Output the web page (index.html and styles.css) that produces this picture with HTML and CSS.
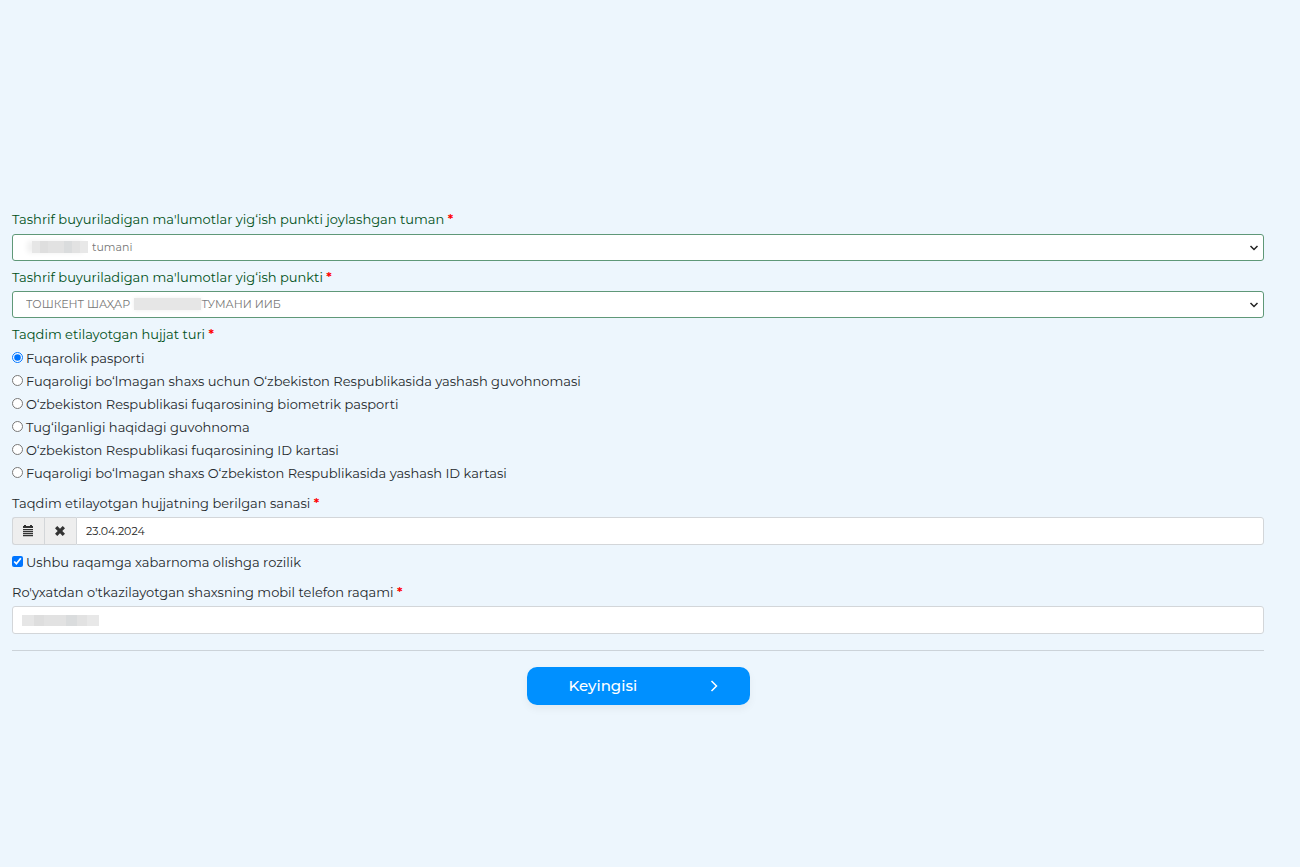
FILE: index.html
```html
<!DOCTYPE html>
<html lang="uz">
<head>
<meta charset="utf-8">
<meta name="viewport" content="width=device-width, initial-scale=1">
<title>Ro'yxatdan o'tish</title>
<link rel="stylesheet" href="styles.css">
</head>
<body>
<form class="form">
  <div class="field valid">
    <label class="label" for="district">Tashrif buyuriladigan ma'lumotlar yig‘ish punkti joylashgan tuman <span class="required">*</span></label>
    <div class="select-wrap">
      <select class="control select district" id="district"><option>tumani</option></select>
      <span class="mask mask-district"></span>
      <svg class="chevron" viewBox="0 0 10 6" aria-hidden="true"><path d="M1.5 1 5 4.5 8.500 1"/></svg>
    </div>
  </div>
  <div class="field valid">
    <label class="label" for="point">Tashrif buyuriladigan ma'lumotlar yig‘ish punkti <span class="required">*</span></label>
    <div class="select-wrap">
      <select class="control select point" id="point"><option>ТОШКЕНТ ШАҲАР&emsp;&emsp;&emsp;&emsp;&emsp;&emsp;&ensp;ТУМАНИ ИИБ</option></select>
      <span class="mask mask-point"></span>
      <svg class="chevron" viewBox="0 0 10 6" aria-hidden="true"><path d="M1.5 1 5 4.500 8.500 1"/></svg>
    </div>
  </div>
  <fieldset class="group valid">
    <legend class="label">Taqdim etilayotgan hujjat turi <span class="required">*</span></legend>
    <label class="choice"><input type="radio" name="doc" checked>Fuqarolik pasporti</label>
    <label class="choice"><input type="radio" name="doc">Fuqaroligi bo‘lmagan shaxs uchun O‘zbekiston Respublikasida yashash guvohnomasi</label>
    <label class="choice"><input type="radio" name="doc">O‘zbekiston Respublikasi fuqarosining biometrik pasporti</label>
    <label class="choice"><input type="radio" name="doc">Tug‘ilganligi haqidagi guvohnoma</label>
    <label class="choice"><input type="radio" name="doc">O‘zbekiston Respublikasi fuqarosining ID kartasi</label>
    <label class="choice"><input type="radio" name="doc">Fuqaroligi bo‘lmagan shaxs O‘zbekiston Respublikasida yashash ID kartasi</label>
  </fieldset>
  <div class="field date-field">
    <label class="label" for="issued">Taqdim etilayotgan hujjatning berilgan sanasi <span class="required">*</span></label>
    <div class="input-group">
      <button class="addon" type="button" aria-label="Kalendar"><svg width="12" height="12" viewBox="0 0 12 12" aria-hidden="true"><path d="M2 0h2v1h4V0h2v1h1v2H1V1h1zM1 4h10v1.300H1zM1 6h10v1.300H1zM1 8h10v1.300H1zM1 10h10v1.300H1z"/></svg></button>
      <button class="addon" type="button" aria-label="Tozalash"><svg width="12" height="12" viewBox="0 0 12 12" aria-hidden="true"><path d="M3.300 1 6 3.700 8.700 1 11 3.300 8.300 6 11 8.700 8.700 11 6 8.300 3.300 11 1 8.700 3.700 6 1 3.300z"/></svg></button>
      <input class="control date" id="issued" type="text" value="23.04.2024">
    </div>
  </div>
  <label class="choice"><input type="checkbox" checked>Ushbu raqamga xabarnoma olishga rozilik</label>
  <div class="field phone-field">
    <label class="label" for="phone">Ro'yxatdan o'tkazilayotgan shaxsning mobil telefon raqami <span class="required">*</span></label>
    <div class="select-wrap">
      <input class="control" id="phone" type="tel">
      <span class="mask mask-phone"></span>
    </div>
  </div>
  <hr class="rule">
  <button class="submit" type="submit"><span>Keyingisi</span><svg width="8" height="12" viewBox="0 0 8 12" aria-hidden="true"><path d="M1.500 1 6.500 6 1.500 11"/></svg></button>
</form>
</body>
</html>
```
FILE: styles.css
```css
* { box-sizing: border-box; }

body {
  margin: 0;
  background: #edf6fd;
  color: #24292c;
  font-family: Montserrat, Inter, "Noto Sans", sans-serif;
  font-size: 13px;
  font-weight: 400;
}

.form {
  display: flex;
  flex-direction: column;
  padding: 209px 36px 40px 12px;
}

.field {
  display: flex;
  flex-direction: column;
  gap: 4px;
  margin-bottom: 6px;
}

.field:first-child { gap: 5px; }

.label {
  padding: 0;
  line-height: 20px;
}

.valid .label { color: #005018; }
.label .required { color: #f00; font-weight: 600; }

.select-wrap {
  display: flex;
  position: relative;
}

.control {
  width: 100%;
  height: 28px;
  margin: 0;
  padding: 0 9px;
  border: 1px solid #d3d6d9;
  border-radius: 3px;
  background: #fff;
  color: #222;
  font: inherit;
  font-size: 11px;
}

.select {
  appearance: none;
  height: 27px;
  padding-bottom: 1px;
  border-color: #5f9878;
  color: #777;
}

.district { padding-left: 79px; }
.point { padding-left: 13px; }

.chevron {
  position: absolute;
  top: 11px;
  right: 5px;
  width: 10px;
  height: 6px;
  fill: none;
  stroke: #222;
  stroke-width: 1.5;
}

.mask {
  position: absolute;
  top: 7px;
  height: 12px;
  background: linear-gradient(90deg, #e6e6e6 0 15%, #dedede 15% 28%, #e2e2e2 28% 57%, #dadcdd 57% 72%, #e2e2e2 72% 85%, #e8e8e8 85%);
}

.mask-district { left: 20px; width: 56px; box-shadow: -5px 0 5px #f1f1f1; }
.mask-point { left: 122px; width: 67px; box-shadow: 0 0 4px #eee; background: #e6e6e6; }
.mask-phone { left: 10px; width: 77px; top: 9px; height: 11px; }

.group {
  display: flex;
  flex-direction: column;
  min-width: 0;
  margin: 0 0 9px;
  padding: 2px 0 0;
  border: 0;
}

.choice {
  display: flex;
  align-items: center;
  gap: 3px;
  height: 23px;
}

.choice input {
  width: 11px;
  height: 11px;
  margin: 0;
  accent-color: #0075ff;
}

.date-field { margin-bottom: 5px; }

.input-group { display: flex; }

.addon {
  display: flex;
  flex: none;
  align-items: center;
  justify-content: center;
  width: 32px;
  padding: 0 2px 0 0;
  border: 1px solid #d3d6d9;
  border-right: 0;
  background: #eee;
  fill: #333;
}

.addon:first-child { border-radius: 3px 0 0 3px; }
.date { border-radius: 0 3px 3px 0; }

.phone-field {
  margin-top: 9px;
  margin-bottom: 16px;
}

.rule {
  width: 100%;
  margin: 0 0 16px;
  border: 0;
  border-top: 1px solid #ccd3d9;
}

.submit {
  display: flex;
  align-items: center;
  align-self: center;
  justify-content: space-between;
  width: 223px;
  height: 38px;
  padding: 0 32px 1px 42px;
  border: 0;
  border-radius: 10px;
  background: #0090ff;
  box-shadow: 0 4px 8px #0000000d;
  color: #fff;
  font: inherit;
  font-size: 15px;
  font-weight: 500;
}

.submit svg {
  fill: none;
  stroke: #fff;
  stroke-width: 1.5;
}
```
